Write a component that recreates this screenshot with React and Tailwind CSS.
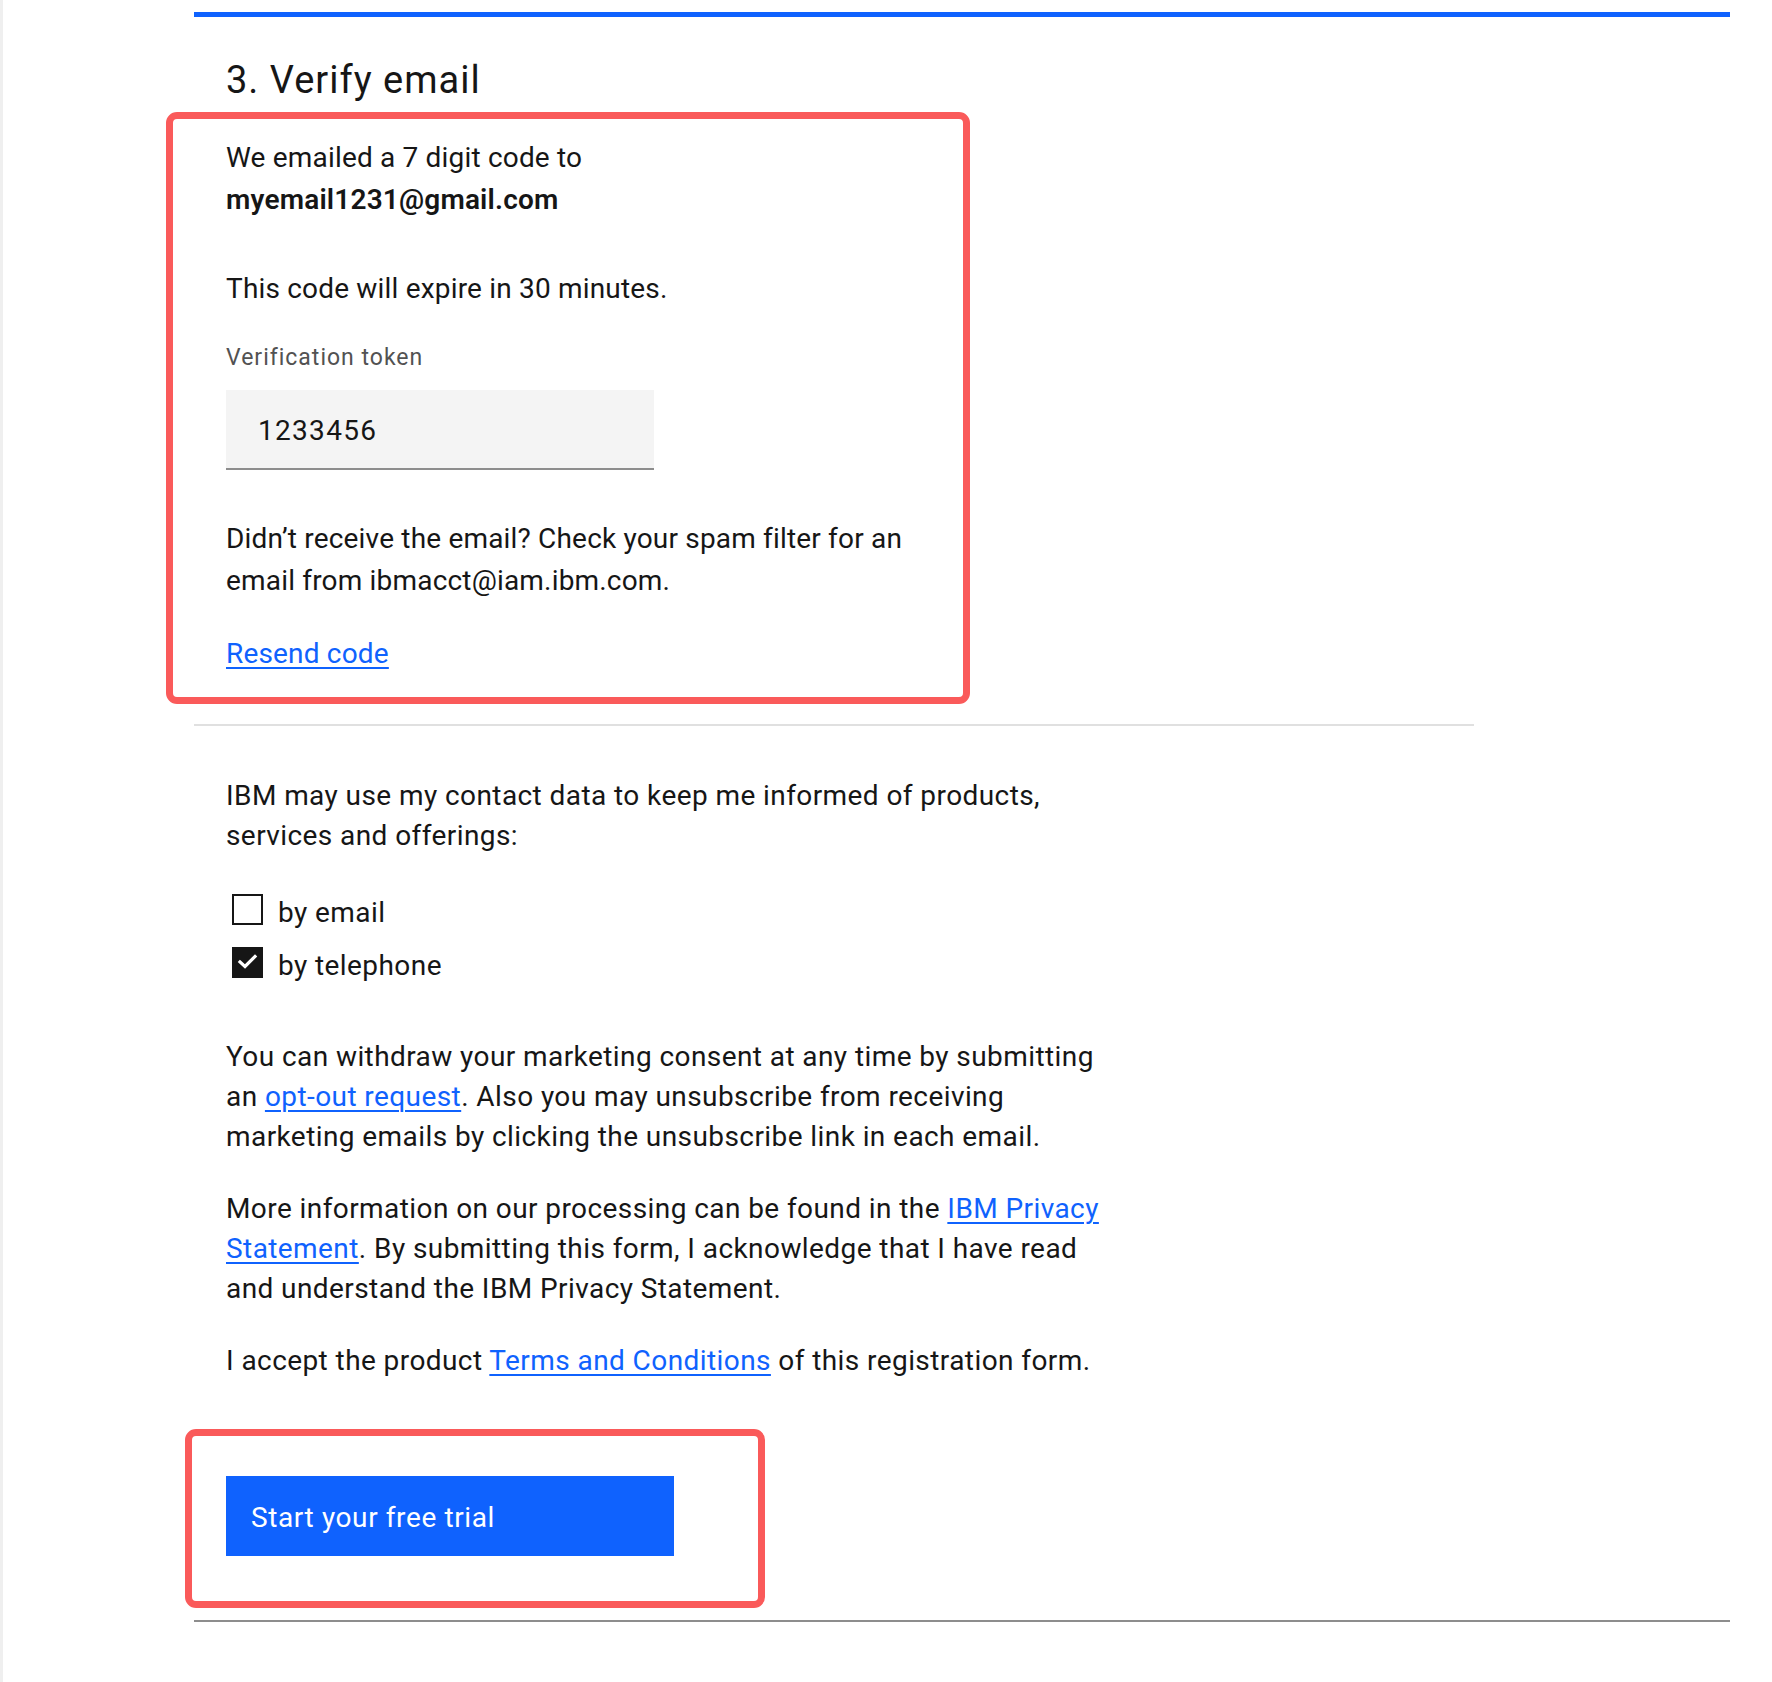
export default function App() {
  const link = "text-[#0f62fe] underline decoration-[2px] underline-offset-[4px]";
  return (
    <div className="min-h-[1682px] w-full bg-white flex font-['Roboto',sans-serif] text-[#161616] tracking-[0.3px]">
      <div className="w-[3px] shrink-0 bg-[#efefef]" />
      <div className="ml-[191px] w-[1536px] flex flex-col">
        <div className="mt-[12px] h-[5px] bg-[#0f62fe]" />
        <h2 className="mt-[41px] pl-[32px] text-[38px] leading-[44px] font-normal tracking-[1px]">3. Verify email</h2>

        <div className="mt-[10px] ml-[-28px] w-[804px] rounded-[11px] border-[7px] border-[#fa5a5a] pl-[53px] pt-[18px] pb-[22px] text-[28px] leading-[42px] tracking-[0.18px] whitespace-nowrap">
          <p>
            We emailed a 7 digit code to
            <br />
            <span className="font-semibold">myemail1231@gmail.com</span>
          </p>
          <p className="mt-[47px]">This code will expire in 30 minutes.</p>
          <label className="mt-[34px] block text-[23px] leading-[28px] tracking-[1px] text-[#525252]">
            Verification token
          </label>
          <div className="mt-[18px] w-[428px] h-[80px] bg-[#f4f4f4] border-b-2 border-[#8d8d8d] flex items-center pl-[32px] pt-[4px] tracking-[1.3px]">
            1233456
          </div>
          <p className="mt-[48px]">
            Didn’t receive the email? Check your spam filter for an
            <br />
            email from ibmacct@iam.ibm.com.
          </p>
          <p className="mt-[31px]">
            <a href="#" className={link}>Resend code</a>
          </p>
        </div>

        <div className="mt-[20px] h-[2px] w-[1280px] bg-[#e0e0e0]" />

        <div className="pl-[32px] text-[28px] leading-[40px] tracking-[0.42px] whitespace-nowrap">
          <p className="mt-[50px]">
            IBM may use my contact data to keep me informed of products,
            <br />
            services and offerings:
          </p>

          <div className="mt-[27px] flex flex-col">
            <label className="h-[53px] flex items-center">
              <span className="ml-[6px] w-[31px] h-[31px] border-2 border-[#161616] bg-white shrink-0" />
              <span className="ml-[15px] pt-[6px]">by email</span>
            </label>
            <label className="h-[53px] flex items-center">
              <span className="ml-[6px] w-[31px] h-[31px] bg-[#161616] shrink-0 flex items-center justify-center">
                <svg width="31" height="31" viewBox="0 0 31 31">
                  <polyline points="8,15 13,19.5 23,9.5" fill="none" stroke="white" strokeWidth="3.2" strokeLinecap="square" />
                </svg>
              </span>
              <span className="ml-[15px] pt-[6px]">by telephone</span>
            </label>
          </div>

          <p className="mt-[48px]">
            You can withdraw your marketing consent at any time by submitting
            <br />
            an <a href="#" className={link}>opt-out request</a>. Also you may unsubscribe from receiving
            <br />
            marketing emails by clicking the unsubscribe link in each email.
          </p>
          <p className="mt-[32px]">
            More information on our processing can be found in the <a href="#" className={link}>IBM Privacy</a>
            <br />
            <a href="#" className={link}>Statement</a>. By submitting this form, I acknowledge that I have read
            <br />
            and understand the IBM Privacy Statement.
          </p>
          <p className="mt-[32px]">
            I accept the product <a href="#" className={link}>Terms and Conditions</a> of this registration form.
          </p>
        </div>

        <div className="mt-[48px] ml-[-9px] w-[580px] h-[179px] rounded-[11px] border-[7px] border-[#fa5a5a] pl-[34px] pt-[40px]">
          <button className="w-[448px] h-[80px] bg-[#0f62fe] text-white text-[28px] leading-[40px] tracking-[0.6px] text-left pl-[25px] pt-[22px] flex items-start">
            Start your free trial
          </button>
        </div>

        <div className="mt-[12px] h-[2px] w-[1536px] bg-[#8d8d8d]" />
      </div>
    </div>
  );
}
